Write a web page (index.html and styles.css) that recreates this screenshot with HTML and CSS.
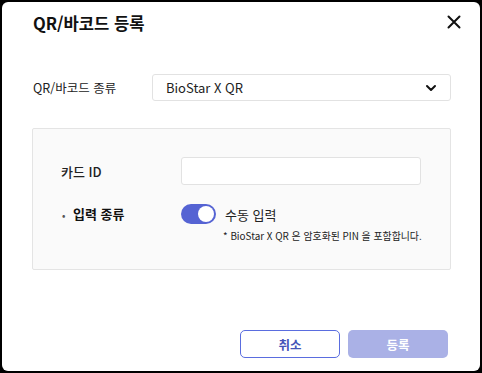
FILE: index.html
```html
<!DOCTYPE html>
<html lang="ko">
<head>
<meta charset="utf-8">
<link rel="stylesheet" href="styles.css">
</head>
<body>
<div class="dialog">
  <div class="header">
    <h1 class="title">QR/바코드 등록</h1>
    <button class="close" aria-label="닫기">
      <svg width="14" height="14" viewBox="0 0 14 14"><path d="M1.5 1.5 L12.5 12.5 M12.5 1.5 L1.5 12.5" stroke="#111" stroke-width="2" stroke-linecap="round"/></svg>
    </button>
  </div>
  <div class="type-row">
    <span class="label">QR/바코드 종류</span>
    <div class="select">
      <span>BioStar X QR</span>
      <svg width="12" height="8" viewBox="0 0 12 8"><path d="M2 2 L6 6 L10 2" fill="none" stroke="#111" stroke-width="2" stroke-linecap="round" stroke-linejoin="round"/></svg>
    </div>
  </div>
  <div class="panel">
    <div class="field">
      <span class="flabel">카드 ID</span>
      <div class="input"></div>
    </div>
    <div class="field field-top">
      <span class="flabel bold"><span class="dot">•</span>입력 종류</span>
      <div class="toggle-wrap">
        <div class="toggle-line">
          <span class="toggle"><span class="knob"></span></span>
          <span class="toggle-text">수동 입력</span>
        </div>
        <div class="note">* BioStar X QR 은 암호화된 PIN 을 포함합니다.</div>
      </div>
    </div>
  </div>
  <div class="footer">
    <button class="btn cancel">취소</button>
    <button class="btn submit">등록</button>
  </div>
</div>
</body>
</html>
```
FILE: styles.css
```css
* { box-sizing: border-box; }
html, body { margin: 0; height: 100%; }
body {
  background: #000;
  padding: 2px 2px 2px 2px;
  font-family: "Noto Sans CJK KR", "Noto Sans", sans-serif;
  color: #222;
}
.dialog {
  background: #fff;
  width: 478px;
  height: 369px;
  border-radius: 6px;
  padding: 0 30px 0 30px;
  display: flex;
  flex-direction: column;
}
.header {
  display: flex;
  align-items: center;
  justify-content: space-between;
  height: 42px;
}
.title {
  margin: 0;
  font-size: 16.6px;
  font-weight: 700;
  color: #111;
  padding-left: 1px;
}
.close {
  border: 0;
  background: none;
  padding: 0;
  width: 14px;
  height: 14px;
  margin-right: -11px;
  margin-top: -2px;
  display: flex;
}
.type-row {
  display: flex;
  align-items: center;
  margin-top: 30px;
  padding-left: 1px;
}
.label {
  width: 119px;
  font-size: 12.5px;
  color: #222;
}
.select {
  flex: 1;
  height: 27px;
  border: 1px solid #e2e2e2;
  border-radius: 3px;
  display: flex;
  align-items: center;
  justify-content: space-between;
  padding: 0 13px 0 13px;
  font-size: 13px;
  color: #222;
  margin-right: -1px;
}
.panel {
  margin-top: 27px;
  background: #fafafa;
  border: 1px solid #e4e4e4;
  border-radius: 2px;
  height: 142px;
  padding: 28px 0 0 28px;
  margin-right: -1px;
}
.field {
  display: flex;
  align-items: center;
}
.field-top {
  align-items: flex-start;
  margin-top: 19px;
}
.flabel {
  width: 120px;
  font-size: 13px;
  color: #222;
  font-weight: 500;
}
.field-top .flabel { line-height: 20px; }
.bold { font-weight: 700; color: #111; }
.dot {
  display: inline-block;
  width: 12px;
  font-size: 9px;
  color: #555;
  padding-left: 1px;
}
.input {
  width: 240px;
  height: 28px;
  background: #fff;
  border: 1px solid #e2e2e2;
  border-radius: 3px;
}
.toggle-line {
  display: flex;
  align-items: center;
  height: 20px;
}
.toggle {
  width: 35px;
  height: 20px;
  background: #5563d3;
  border-radius: 10px;
  position: relative;
  display: inline-block;
}
.knob {
  position: absolute;
  right: 2px;
  top: 2px;
  width: 16px;
  height: 16px;
  border-radius: 50%;
  background: #fff;
}
.toggle-text {
  margin-left: 9px;
  font-size: 13px;
  color: #222;
}
.note {
  font-size: 9.9px;
  color: #222;
  margin-top: 5px;
  margin-left: 42px;
}
.footer {
  margin-top: auto;
  display: flex;
  justify-content: flex-end;
  gap: 8px;
  padding-bottom: 13px;
  margin-right: 2px;
}
.btn {
  width: 100px;
  height: 28px;
  border-radius: 5px;
  font-family: inherit;
  font-size: 12.5px;
  font-weight: 700;
}
.cancel {
  background: #fff;
  border: 1px solid #5a6ddf;
  color: #4454b8;
}
.submit {
  background: #aab1e6;
  border: 0;
  color: #fff;
}
```
